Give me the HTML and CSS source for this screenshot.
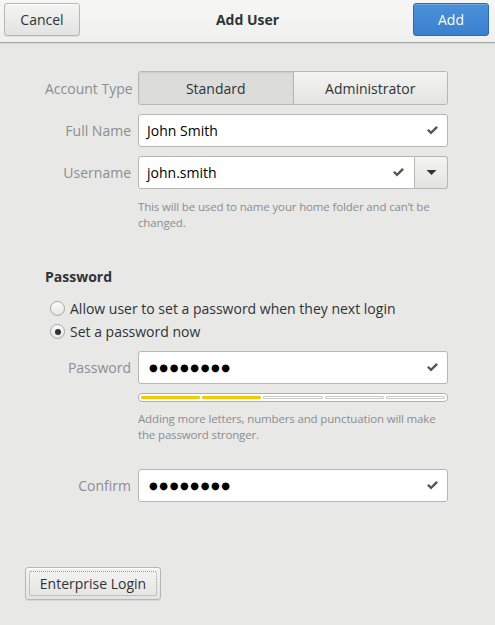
FILE: index.html
```html
<!DOCTYPE html>
<html>
<head>
<meta charset="utf-8">
<link rel="stylesheet" href="styles.css">
</head>
<body>
<div class="window">
  <header class="headerbar">
    <button class="btn hb-btn">Cancel</button>
    <div class="title">Add User</div>
    <button class="btn hb-btn suggested">Add</button>
  </header>
  <main class="content">
    <div class="grid">
      <div class="label">Account Type</div>
      <div class="toggle">
        <div class="seg active">Standard</div>
        <div class="seg">Administrator</div>
      </div>

      <div class="label">Full Name</div>
      <div class="entry"><span class="val">John Smith</span><svg class="check" viewBox="0 0 11 9"><path d="M0 4.6 L1.8 3 L4 5.2 L9.2 0 L11 1.7 L4 8.6 Z" fill="#555753"/></svg></div>

      <div class="label">Username</div>
      <div class="combo">
        <div class="entry in-combo"><span class="val">john.smith</span><svg class="check" viewBox="0 0 11 9"><path d="M0 4.6 L1.8 3 L4 5.2 L9.2 0 L11 1.7 L4 8.6 Z" fill="#555753"/></svg></div>
        <div class="combo-btn"><svg viewBox="0 0 12 6" class="arrow"><path d="M0 0 H12 L6 6 Z" fill="#2e3436"/></svg></div>
      </div>
      <div></div>
      <div class="hint first-hint">This will be used to name your home folder and can’t be changed.</div>
    </div>

    <h2 class="section">Password</h2>
    <div class="radio-row"><span class="radio"></span><span>Allow user to set a password when they next login</span></div>
    <div class="radio-row"><span class="radio checked"></span><span>Set a password now</span></div>

    <div class="grid pw-grid">
      <div class="label">Password</div>
      <div class="entry"><span class="dots">●●●●●●●●</span><svg class="check" viewBox="0 0 11 9"><path d="M0 4.6 L1.8 3 L4 5.2 L9.2 0 L11 1.7 L4 8.6 Z" fill="#555753"/></svg></div>
      <div></div>
      <div class="meter">
        <span class="lvl on"></span><span class="lvl on"></span><span class="lvl"></span><span class="lvl"></span><span class="lvl"></span>
      </div>
      <div></div>
      <div class="hint pw-hint">Adding more letters, numbers and punctuation will make the password stronger.</div>
    </div>

    <div class="grid confirm-grid">
      <div class="label">Confirm</div>
      <div class="entry"><span class="dots">●●●●●●●●</span><svg class="check" viewBox="0 0 11 9"><path d="M0 4.6 L1.8 3 L4 5.2 L9.2 0 L11 1.7 L4 8.6 Z" fill="#555753"/></svg></div>
    </div>

    <div class="footer">
      <button class="btn enterprise"><span class="focus">Enterprise Login</span></button>
    </div>
  </main>
</div>
</body>
</html>
```
FILE: styles.css
```css
* { box-sizing: border-box; }
html, body { margin: 0; padding: 0; }
body {
  width: 495px;
  height: 625px;
  background: #e8e8e7;
  font-family: "Open Sans", "Noto Sans", sans-serif;
  font-size: 14px;
  color: #2e3436;
  overflow: hidden;
}
.window { width: 495px; height: 625px; }
.headerbar {
  height: 43px;
  background: linear-gradient(#f6f6f5, #f0f0ef);
  border-bottom: 1px solid #a8a8a5;
  box-shadow: 0 1px 0 #d6d6d4;
  display: flex;
  align-items: flex-start;
  justify-content: space-between;
  padding: 3px 6px 0 4px;
  position: relative;
}
.title {
  font-weight: bold;
  font-size: 14px;
  line-height: 33px;
  color: #2e3436;
  position: absolute;
  left: 0; right: 0;
  top: 3px;
  text-align: center;
  pointer-events: none;
}
.btn {
  font-family: inherit;
  font-size: 14px;
  color: #2e3436;
  background: linear-gradient(#f4f4f3, #e3e3e1);
  border: 1px solid #b6b6b3;
  border-radius: 3px;
  box-shadow: inset 0 1px #ffffff, 0 1px rgba(0,0,0,0.07);
  padding: 0;
  height: 33px;
}
.hb-btn { width: 76px; }
.suggested {
  color: #ffffff;
  background: linear-gradient(#4a90d9, #3a80cf);
  border-color: #2a6ab8;
  box-shadow: inset 0 1px rgba(255,255,255,0.25);
}
.content { padding: 28px 47px 0 45px; }
.grid {
  display: grid;
  grid-template-columns: 86px 310px;
  column-gap: 7px;
  row-gap: 9px;
  align-items: center;
}
.label {
  text-align: right;
  color: #8b8e8f;
  font-size: 14px;
  white-space: nowrap;
}
.toggle {
  display: flex;
  height: 34px;
  border: 1px solid #b6b6b3;
  border-radius: 3px;
  overflow: hidden;
}
.seg {
  flex: 1;
  display: flex;
  align-items: center;
  justify-content: center;
  background: linear-gradient(#f4f4f3, #e3e3e1);
}
.seg + .seg { border-left: 1px solid #b6b6b3; }
.seg.active { background: #dcdcda; box-shadow: inset 0 1px 2px rgba(0,0,0,0.08); }
.entry {
  height: 33px;
  background: #ffffff;
  border: 1px solid #b6b6b3;
  border-radius: 3px;
  display: flex;
  align-items: center;
  padding: 0 9px 0 8px;
}
.val { flex: 1; color: #000; }
.check { width: 11px; height: 9px; margin-left: auto; }
.combo { display: flex; height: 33px; }
.entry.in-combo { flex: 1; border-radius: 3px 0 0 3px; padding-right: 10px; }
.combo-btn {
  width: 33px;
  height: 33px;
  border: 1px solid #b6b6b3;
  border-left: none;
  border-radius: 0 3px 3px 0;
  background: linear-gradient(#f4f4f3, #e3e3e1);
  display: flex;
  align-items: center;
  justify-content: center;
}
.arrow { width: 11px; height: 5px; }
.hint {
  font-size: 11.5px;
  letter-spacing: -0.15px;
  line-height: 16px;
  color: #8b8e8f;
  margin-top: 1px;
}
.section {
  font-size: 14px;
  font-weight: bold;
  margin: 36px 0 0 0;
  line-height: 20px;
}
.radio-row {
  display: flex;
  align-items: center;
  gap: 5px;
  margin-left: 5px;
  height: 23px;
}
.section + .radio-row { margin-top: 10px; }
.radio {
  width: 15px; height: 15px;
  border: 1px solid #a5a5a2;
  border-radius: 50%;
  background: linear-gradient(#fbfbfa, #e6e6e4);
  display: flex; align-items: center; justify-content: center;
}
.radio.checked::after {
  content: "";
  width: 6px; height: 6px;
  border-radius: 50%;
  background: #2e3436;
}
.pw-grid { margin-top: 8px; row-gap: 9px; }
.dots {
  flex: 1;
  font-family: "DejaVu Sans", sans-serif;
  font-size: 10px;
  letter-spacing: 1.6px;
  color: #000;
  margin-left: 2px;
}
.meter {
  height: 9px;
  border: 1px solid #b0b0ad;
  border-radius: 4px;
  background: #ffffff;
  display: flex;
  gap: 2px;
  padding: 2px 2px;
  margin-top: 0;
}
.lvl {
  flex: 1;
  border: 1px solid #c9c9c6;
  border-radius: 1px;
}
.lvl.on { background: #f3d21e; border-color: #ebc400; }
.pw-hint { margin-top: 0; }
.confirm-grid { margin-top: 26px; }
.footer { margin-top: 65px; margin-left: -20px; }
.enterprise {
  width: 136px;
  height: 33px;
  padding: 3px;
}
.focus {
  display: flex;
  align-items: center;
  justify-content: center;
  height: 100%;
  border: 1px dotted #9a9a97;
  border-radius: 2px;
}
```
